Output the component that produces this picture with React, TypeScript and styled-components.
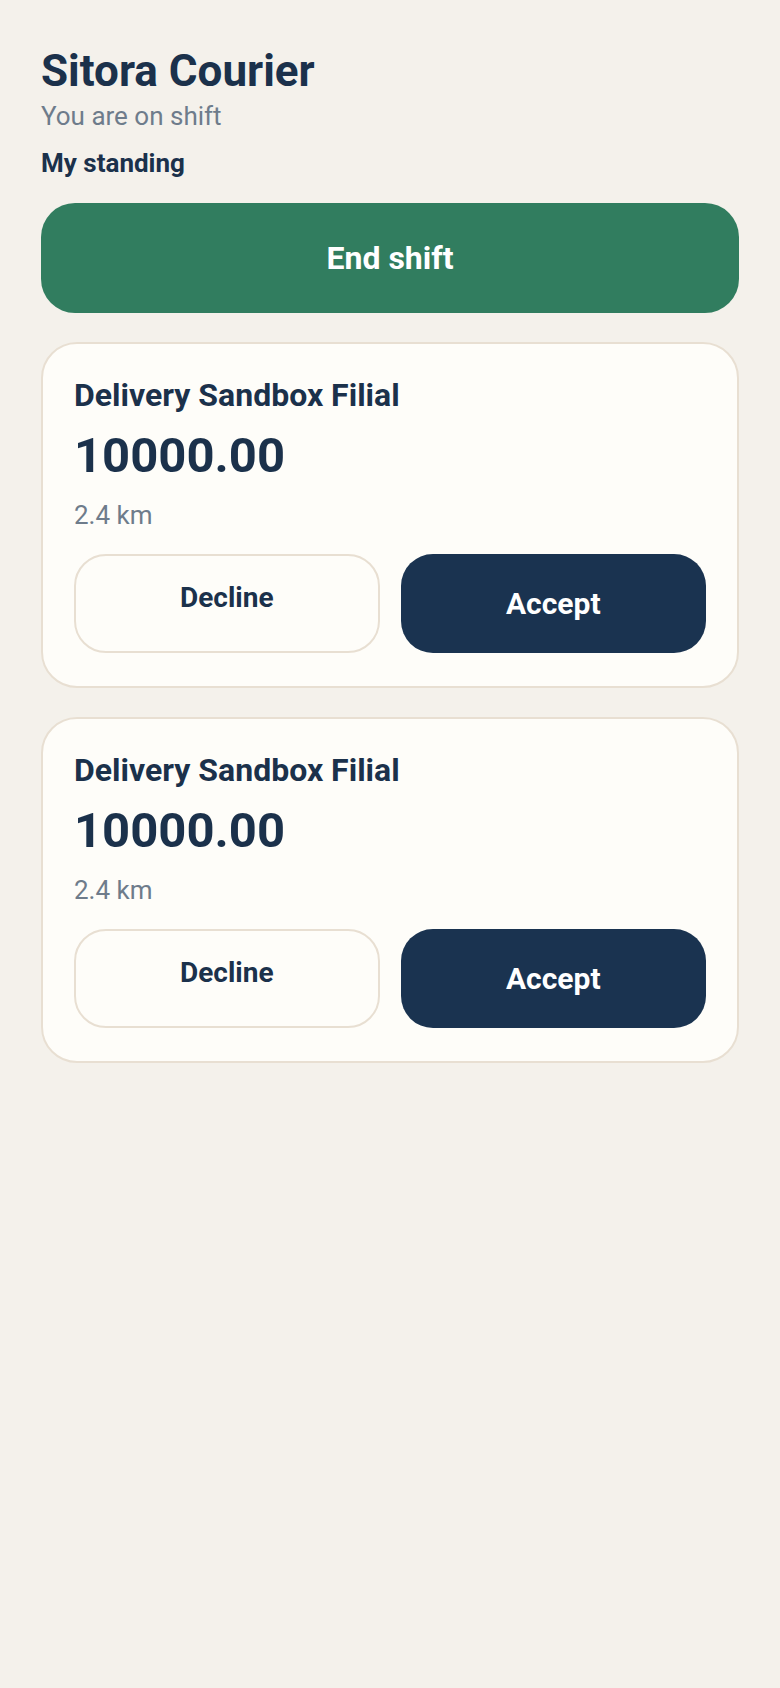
import styled, { createGlobalStyle } from 'styled-components';

const COLORS = {
  page: '#f4f1eb',
  ink: '#1b314b',
  muted: '#6e7c8b',
  card: '#fefdf9',
  line: '#e8dfd2',
  green: '#317d5f',
  navy: '#1a3350',
  white: '#ffffff',
};

type Offer = {
  id: number;
  branch: string;
  amount: string;
  distance: string;
};

const offers: Offer[] = [
  { id: 1, branch: 'Delivery Sandbox Filial', amount: '10000.00', distance: '2.4 km' },
  { id: 2, branch: 'Delivery Sandbox Filial', amount: '10000.00', distance: '2.4 km' },
];

const GlobalStyle = createGlobalStyle`
  html, body {
    margin: 0;
    padding: 0;
    background-color: ${COLORS.page};
  }
  body {
    font-family: Roboto, "Liberation Sans", sans-serif;
    color: ${COLORS.ink};
  }
  * { box-sizing: border-box; }
`;

const OfferCard = ({ data: { branch, amount, distance } }: { data: Offer }) => (
  <Card>
    <Branch>{branch}</Branch>
    <Amount>{amount}</Amount>
    <Distance>{distance}</Distance>
    <Actions>
      <DeclineButton type="button">Decline</DeclineButton>
      <AcceptButton type="button">Accept</AcceptButton>
    </Actions>
  </Card>
);

const App = () => (
  <>
    <GlobalStyle />
    <Root>
      <Header>
        <Title>Sitora Courier</Title>
        <Status>You are on shift</Status>
        <StandingLink>My standing</StandingLink>
      </Header>

      <ShiftButton type="button">End shift</ShiftButton>

      {offers.map((offer) => <OfferCard key={offer.id} data={offer} />)}
    </Root>
  </>
);

const Root = styled.div`
  width: 780px;
  min-height: 1688px;
  padding: 46px 41px 40px;
  background-color: ${COLORS.page};

  display: flex;
  flex-direction: column;
  gap: 29px;
`;

const Header = styled.div`
  display: flex;
  flex-direction: column;
  margin-bottom: -5px;
`;

const Title = styled.h1`
  margin: 0;
  font-size: 44px;
  line-height: 50px;
  font-weight: 700;
  color: ${COLORS.ink};
`;

const Status = styled.div`
  margin: 4px 0px 0px;
  font-size: 26px;
  line-height: 32px;
  font-weight: 400;
  color: ${COLORS.muted};
`;

const StandingLink = styled.div`
  margin: 15px 0px 0px;
  font-size: 26px;
  line-height: 32px;
  font-weight: 700;
  color: ${COLORS.ink};
  cursor: pointer;
`;

const ShiftButton = styled.button`
  width: 100%;
  height: 110px;
  border: none;
  border-radius: 34px;
  background-color: ${COLORS.green};

  font-family: inherit;
  font-size: 32px;
  font-weight: 700;
  color: ${COLORS.white};
  cursor: pointer;
`;

const Card = styled.div`
  width: 100%;
  padding: 32px 31px 33px;
  border: 2px solid ${COLORS.line};
  border-radius: 36px;
  background-color: ${COLORS.card};

  display: flex;
  flex-direction: column;
`;

const Branch = styled.div`
  font-size: 32px;
  line-height: 38px;
  font-weight: 700;
  color: ${COLORS.ink};
`;

const Amount = styled.div`
  margin: 14px 0px 0px;
  font-size: 49px;
  line-height: 56px;
  font-weight: 700;
  color: ${COLORS.ink};
`;

const Distance = styled.div`
  margin: 15px 0px 0px;
  font-size: 26px;
  line-height: 32px;
  color: ${COLORS.muted};
`;

const Actions = styled.div`
  margin: 23px 0px 0px;
  display: grid;
  grid-template-columns: 1fr 1fr;
  gap: 21px;
`;

const ActionButton = styled.button`
  height: 99px;
  border-radius: 32px;

  font-family: inherit;
  font-weight: 700;
  cursor: pointer;
`;

const DeclineButton = styled(ActionButton)`
  padding: 0px 0px 12px;
  border: 2px solid ${COLORS.line};
  background-color: ${COLORS.card};
  font-size: 28px;
  color: ${COLORS.ink};
`;

const AcceptButton = styled(ActionButton)`
  border: none;
  background-color: ${COLORS.navy};
  font-size: 30px;
  color: ${COLORS.white};
`;

export default App;
